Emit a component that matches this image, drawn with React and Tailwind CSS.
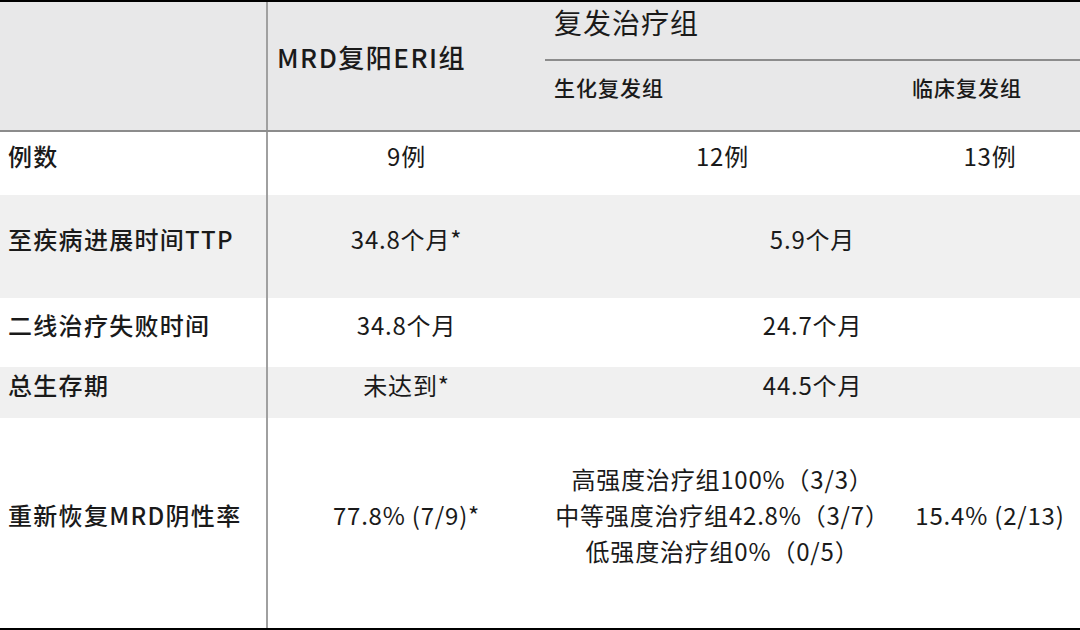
import React from "react";

const cols = "grid grid-cols-[268px_277px_355px_1fr]";
const label =
  "flex items-center pl-2 pb-[16px] border-r-2 border-[#a0a0a0] text-[24px] font-medium tracking-[1.3px]";
const cell = "flex items-center justify-center pb-[16px] text-[24px] tracking-[0.8px]";

const rows = [
  { name: "例数", h: "h-[63px]", bg: "bg-white", mrd: "9例", split: ["12例", "13例"] },
  { name: "至疾病进展时间TTP", h: "h-[103px]", bg: "bg-[#f0f0f0]", mrd: "34.8个月*", both: "5.9个月" },
  { name: "二线治疗失败时间", h: "h-[69px]", bg: "bg-white", mrd: "34.8个月", both: "24.7个月" },
  { name: "总生存期", h: "h-[51px]", bg: "bg-[#f0f0f0]", mrd: "未达到*", both: "44.5个月" },
];

const App = () => {
  return (
    <div className="w-[1080px] h-[630px] bg-white border-y-2 border-black text-[#1a1a1a] font-['Noto_Sans_CJK_SC',sans-serif] overflow-hidden">
      {/* header */}
      <div className={`${cols} h-[130px] bg-[#e8e8e9] border-b-2 border-[#8c8c8c]`}>
        <div className="border-r-2 border-[#a0a0a0]" />
        <div className="flex items-center pl-[9px] pb-[19px] text-[26px] font-medium tracking-[1.5px]">
          MRD复阳ERI组
        </div>
        <div className="col-span-2 flex flex-col">
          <div className="h-[59px] flex items-center pl-[9px] pb-[18px] text-[28px] tracking-[1px] border-b-2 border-[#8c8c8c]">
            复发治疗组
          </div>
          <div className="flex-1 grid grid-cols-[355px_1fr] pb-[16px] text-[21px] font-medium tracking-[1px]">
            <div className="flex items-center pl-[9px]">生化复发组</div>
            <div className="flex items-center pl-[12px]">临床复发组</div>
          </div>
        </div>
      </div>

      {rows.map((r) => (
        <div key={r.name} className={`${cols} ${r.h} ${r.bg}`}>
          <div className={label}>{r.name}</div>
          <div className={cell}>{r.mrd}</div>
          {r.split ? (
            <>
              <div className={cell}>{r.split[0]}</div>
              <div className={cell}>{r.split[1]}</div>
            </>
          ) : (
            <div className={`${cell} col-span-2`}>{r.both}</div>
          )}
        </div>
      ))}

      <div className={`${cols} h-[210px] bg-white`}>
        <div className={label}>重新恢复MRD阴性率</div>
        <div className={cell}>77.8% (7/9)*</div>
        <div className={`${cell} flex-col leading-[36px]`}>
          <span>高强度治疗组100%（3/3）</span>
          <span>中等强度治疗组42.8%（3/7）</span>
          <span>低强度治疗组0%（0/5）</span>
        </div>
        <div className={cell}>15.4% (2/13)</div>
      </div>
    </div>
  );
};

export default App;
